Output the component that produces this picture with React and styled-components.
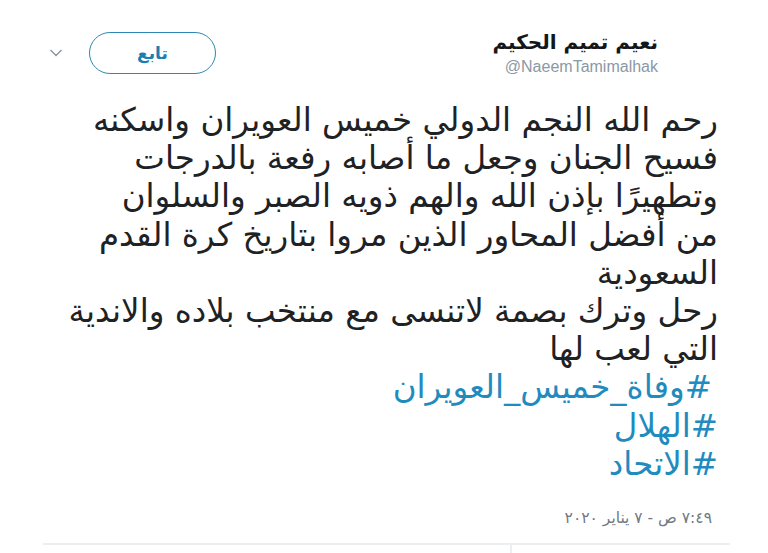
import React from "react";
import styled, { createGlobalStyle } from "styled-components";

const Global = createGlobalStyle`
  html, body { margin: 0; padding: 0; background: #ffffff; }
  body { font-family: "DejaVu Sans", "Noto Sans", sans-serif; }
`;

const Card = styled.div`
  direction: rtl;
  width: 687px;
  margin-left: 43px;
  height: 553px;
  display: flex;
  flex-direction: column;
  box-sizing: border-box;
`;

const Header = styled.div`
  display: flex;
  align-items: center;
  justify-content: space-between;
  padding: 28px 72px 0 0;
  height: 50px;
`;

const NameBlock = styled.div`
  display: flex;
  flex-direction: column;
  align-items: flex-start;
`;

const Name = styled.div`
  font-family: "DejaVu Sans", sans-serif;
  font-weight: bold;
  font-size: 20px;
  line-height: 24px;
  color: #14171a;
`;

const Handle = styled.div`
  direction: ltr;
  font-family: "Liberation Sans", Arial, sans-serif;
  font-size: 16px;
  line-height: 20px;
  color: #8b98a5;
  margin-top: 3px;
`;

const Actions = styled.div`
  display: flex;
  align-items: center;
  direction: ltr;
  gap: 26px;
  padding-left: 6px;
`;

const Chevron = styled.svg`
  width: 14px;
  height: 10px;
`;

const FollowButton = styled.button`
  width: 127px;
  height: 42px;
  border-radius: 21px;
  border: 1.5px solid #2f88b4;
  background: #ffffff;
  color: #1b7db2;
  font-family: "DejaVu Sans", sans-serif;
  font-weight: bold;
  font-size: 17px;
  padding: 0;
`;

const Body = styled.div`
  padding: 23px 12px 0 0;
  display: flex;
  flex-direction: column;
  align-items: flex-start;
`;

const Line = styled.div`
  font-family: "DejaVu Sans", sans-serif;
  font-size: 32.5px;
  line-height: 38.2px;
  white-space: nowrap;
  color: ${(p) => (p.$link ? "#1f8bbf" : "#1e2225")};
  padding-right: ${(p) => (p.$indent ? "6px" : "0")};
`;

const Time = styled.div`
  font-family: "DejaVu Sans", sans-serif;
  font-size: 15.5px;
  color: #707a82;
  padding: 26px 6px 0 0;
`;

const Footer = styled.div`
  margin-top: auto;
  height: 8px;
  border-top: 2px solid #eceff1;
  display: flex;
`;

const Divider = styled.div`
  width: 218px;
  border-left: 2px solid #eceff1;
`;

export default function App() {
  return (
    <>
      <Global />
      <Card>
        <Header>
          <NameBlock>
            <Name>نعيم تميم الحكيم</Name>
            <Handle>@NaeemTamimalhak</Handle>
          </NameBlock>
          <Actions>
            <Chevron viewBox="0 0 14 10">
              <polyline points="1.5,2 7,7.5 12.5,2" fill="none" stroke="#8a949c" strokeWidth="1.4" />
            </Chevron>
            <FollowButton>تابع</FollowButton>
          </Actions>
        </Header>
        <Body>
          <Line>رحم الله النجم الدولي خميس العويران واسكنه</Line>
          <Line>فسيح الجنان وجعل ما أصابه رفعة بالدرجات</Line>
          <Line>وتطهيرًا بإذن الله والهم ذويه الصبر والسلوان</Line>
          <Line>من أفضل المحاور الذين مروا بتاريخ كرة القدم</Line>
          <Line>السعودية</Line>
          <Line>رحل وترك بصمة لاتنسى مع منتخب بلاده والاندية</Line>
          <Line>التي لعب لها</Line>
          <Line $link $indent>#وفاة_خميس_العويران</Line>
          <Line $link>#الهلال</Line>
          <Line $link>#الاتحاد</Line>
          <Time>٧:٤٩ ص - ٧ يناير ٢٠٢٠</Time>
        </Body>
        <Footer>
          <Divider />
        </Footer>
      </Card>
    </>
  );
}
